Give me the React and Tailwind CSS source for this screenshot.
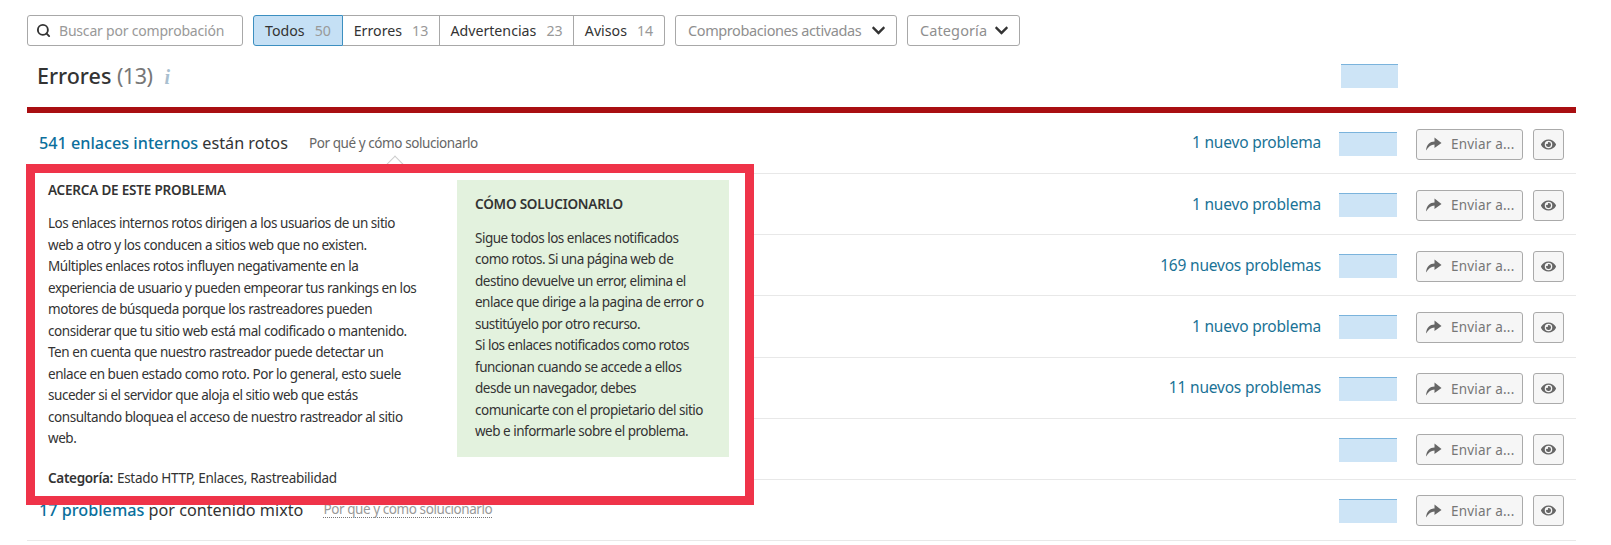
import React from 'react';
import { FaChevronDown, FaEye } from 'react-icons/fa';
import { Search } from 'lucide-react';

const tabs = [
  { label: 'Todos', count: 50, width: 'w-[90px]', active: true },
  { label: 'Errores', count: 13, width: 'w-[97px]' },
  { label: 'Advertencias', count: 23, width: 'w-[134px]' },
  { label: 'Avisos', count: 14, width: 'w-[91px]' },
];

const rows = [
  { link: '541 enlaces internos', rest: ' están rotos', news: '1 nuevo problema', why: 'plain' },
  { news: '1 nuevo problema' },
  { news: '169 nuevos problemas' },
  { news: '1 nuevo problema' },
  { news: '11 nuevos problemas' },
  {},
  { link: '17 problemas', rest: ' por contenido mixto', why: 'dotted' },
];

const aboutLines = [
  'Los enlaces internos rotos dirigen a los usuarios de un sitio',
  'web a otro y los conducen a sitios web que no existen.',
  'Múltiples enlaces rotos influyen negativamente en la',
  'experiencia de usuario y pueden empeorar tus rankings en los',
  'motores de búsqueda porque los rastreadores pueden',
  'considerar que tu sitio web está mal codificado o mantenido.',
  'Ten en cuenta que nuestro rastreador puede detectar un',
  'enlace en buen estado como roto. Por lo general, esto suele',
  'suceder si el servidor que aloja el sitio web que estás',
  'consultando bloquea el acceso de nuestro rastreador al sitio',
  'web.',
];

const fixLines = [
  'Sigue todos los enlaces notificados',
  'como rotos. Si una página web de',
  'destino devuelve un error, elimina el',
  'enlace que dirige a la pagina de error o',
  'sustitúyelo por otro recurso.',
  'Si los enlaces notificados como rotos',
  'funcionan cuando se accede a ellos',
  'desde un navegador, debes',
  'comunicarte con el propietario del sitio',
  'web e informarle sobre el problema.',
];

const Dropdown = ({ label, className }) => (
  <button className={`flex items-center justify-between h-[31px] pl-[12px] pr-[10px] border border-[#a8a8a8] rounded-[3px] text-[14.5px] text-[#8f8f8f] whitespace-nowrap ${className}`}>
    {label}
    <FaChevronDown className="w-[15px] h-[15px] text-[#333]" />
  </button>
);

const ShareIcon = () => (
  <svg className="w-[16px] h-[14px] text-[#666]" viewBox="0 0 16 14" fill="currentColor">
    <path d="M0 13.5C0.5 7.5 4 4.5 8.5 4.5V0.5L15.5 6L8.5 11V7.5C5 7.5 2.5 9.5 0 13.5Z" />
  </svg>
);

const Row = ({ row }) => (
  <div className="flex items-center h-[61.15px] border-b border-[#e8e8e8] pl-[12px] pr-[12px]">
    <div className="flex-1 flex items-center min-w-0">
      {row.link && (
        <p className="text-[16.2px] text-[#333] whitespace-pre">
          <span className="font-medium text-[#0b6f9c]">{row.link}</span>
          {row.rest}
        </p>
      )}
      {row.why === 'plain' && (
        <span className="ml-[21px] text-[13.5px] tracking-[-0.42px] text-[#666]">Por qué y cómo solucionarlo</span>
      )}
      {row.why === 'dotted' && (
        <span className="ml-[20px] text-[13.5px] tracking-[-0.42px] text-[#999] border-b border-dotted border-[#777] leading-[16px]">Por qué y cómo solucionarlo</span>
      )}
    </div>
    {row.news && <span className="text-[15.5px] tracking-[-0.2px] text-[#1a7296]">{row.news}</span>}
    <div className="ml-[18px] mt-[2px] w-[58px] h-[24px] bg-[#cde4f6] border-t border-[#7ab3dc]"></div>
    <button className="ml-[19px] mt-[2px] flex items-center w-[107px] h-[31px] pl-[9px] bg-[#f6f6f6] border border-[#aaa] rounded-[3px] text-[13.5px] tracking-[0.2px] text-[#777]">
      <ShareIcon />
      <span className="ml-[9px]">Enviar a...</span>
    </button>
    <button className="ml-[10px] mt-[2px] flex items-center justify-center w-[31px] h-[31px] bg-[#f6f6f6] border border-[#aaa] rounded-[3px]">
      <FaEye className="w-[15px] h-[15px] text-[#666]" />
    </button>
  </div>
);

const App = () => {
  return (
    <div className="relative w-[1611px] h-[545px] overflow-hidden bg-white font-['Noto_Sans',sans-serif]">
      <div className="pl-[27px] pr-[35px] pt-[15px]">
        {/* Toolbar */}
        <div className="flex items-center">
          <div className="flex items-center w-[216px] h-[31px] pl-[8px] border border-[#a8a8a8] rounded-[3px]">
            <Search className="w-[15px] h-[15px] text-[#333]" strokeWidth={3} />
            <span className="ml-[8px] text-[14px] tracking-[-0.2px] text-[#999] whitespace-nowrap">Buscar por comprobación</span>
          </div>
          <div className="flex ml-[10px]">
            {tabs.map((tab, i) => (
              <div
                key={tab.label}
                className={`flex items-center justify-center gap-[10px] h-[31px] ${tab.width} border text-[14.2px] ${
                  tab.active
                    ? 'bg-[#c5e0f5] border-[#3c8fc0] rounded-l-[3px]'
                    : 'border-[#a8a8a8] border-l-0'
                } ${i === tabs.length - 1 ? 'rounded-r-[3px]' : ''}`}
              >
                <span className="text-[#333]">{tab.label}</span>
                <span className="text-[#999]">{tab.count}</span>
              </div>
            ))}
          </div>
          <div className="flex gap-[10px] ml-[10px]">
            <Dropdown label="Comprobaciones activadas" className="w-[222px] tracking-[-0.4px]" />
            <Dropdown label="Categoría" className="w-[113px] tracking-[0.1px]" />
          </div>
        </div>

        {/* Section heading */}
        <div className="flex items-center h-[61px]">
          <div className="flex-1 flex items-center pl-[10px]">
            <h2 className="text-[21.5px] text-[#333] -mt-[1px]">
              <span className="font-medium">Errores</span> <span className="text-[#777] tracking-[-0.5px]">(13)</span>
            </h2>
            <span className="ml-[12px] text-[20px] leading-[20px] font-bold italic text-[#a9bfd0] font-['Liberation_Serif',serif]">i</span>
          </div>
          <div className="mr-[178px] -mt-[2px] w-[57px] h-[24px] bg-[#cde4f6] border-t border-[#7ab3dc]"></div>
        </div>

        {/* Issue list */}
        <div className="h-[6px] bg-[#a90e11]"></div>
        {rows.map((row, i) => (
          <Row key={i} row={row} />
        ))}
      </div>

      {/* Tooltip arrow */}
      <div className="absolute left-[389px] top-[158px] w-[12px] h-[12px] rotate-45 bg-white border-l border-t border-[#ccc]"></div>

      {/* Highlighted problem popup */}
      <div className="absolute left-[26px] top-[164px] w-[728px] h-[341px] border-[9px] border-[#ef3349] bg-white flex justify-between pl-[13px] pr-[16px] pt-[7px] text-[#333]">
        <div>
          <h3 className="text-[13.5px] font-semibold leading-[20px] tracking-[-0.2px]">ACERCA DE ESTE PROBLEMA</h3>
          <div className="mt-[13px] text-[13.5px] leading-[21.55px] tracking-[-0.45px] whitespace-nowrap">
            {aboutLines.map((line) => (
              <p key={line}>{line}</p>
            ))}
          </div>
          <p className="mt-[18px] text-[13.5px] leading-[20px] tracking-[-0.3px]">
            <span className="font-semibold">Categoría:</span>
            <span className="ml-[4px]">Estado HTTP, Enlaces, Rastreabilidad</span>
          </p>
        </div>
        <div className="w-[272px] h-[277px] bg-[#e3f2de] pl-[18px] pt-[14px]">
          <h3 className="text-[13.5px] font-semibold leading-[20px] tracking-[-0.2px]">CÓMO SOLUCIONARLO</h3>
          <div className="mt-[14px] text-[13.5px] leading-[21.45px] tracking-[-0.5px] whitespace-nowrap">
            {fixLines.map((line) => (
              <p key={line}>{line}</p>
            ))}
          </div>
        </div>
      </div>
    </div>
  );
};

export default App;
